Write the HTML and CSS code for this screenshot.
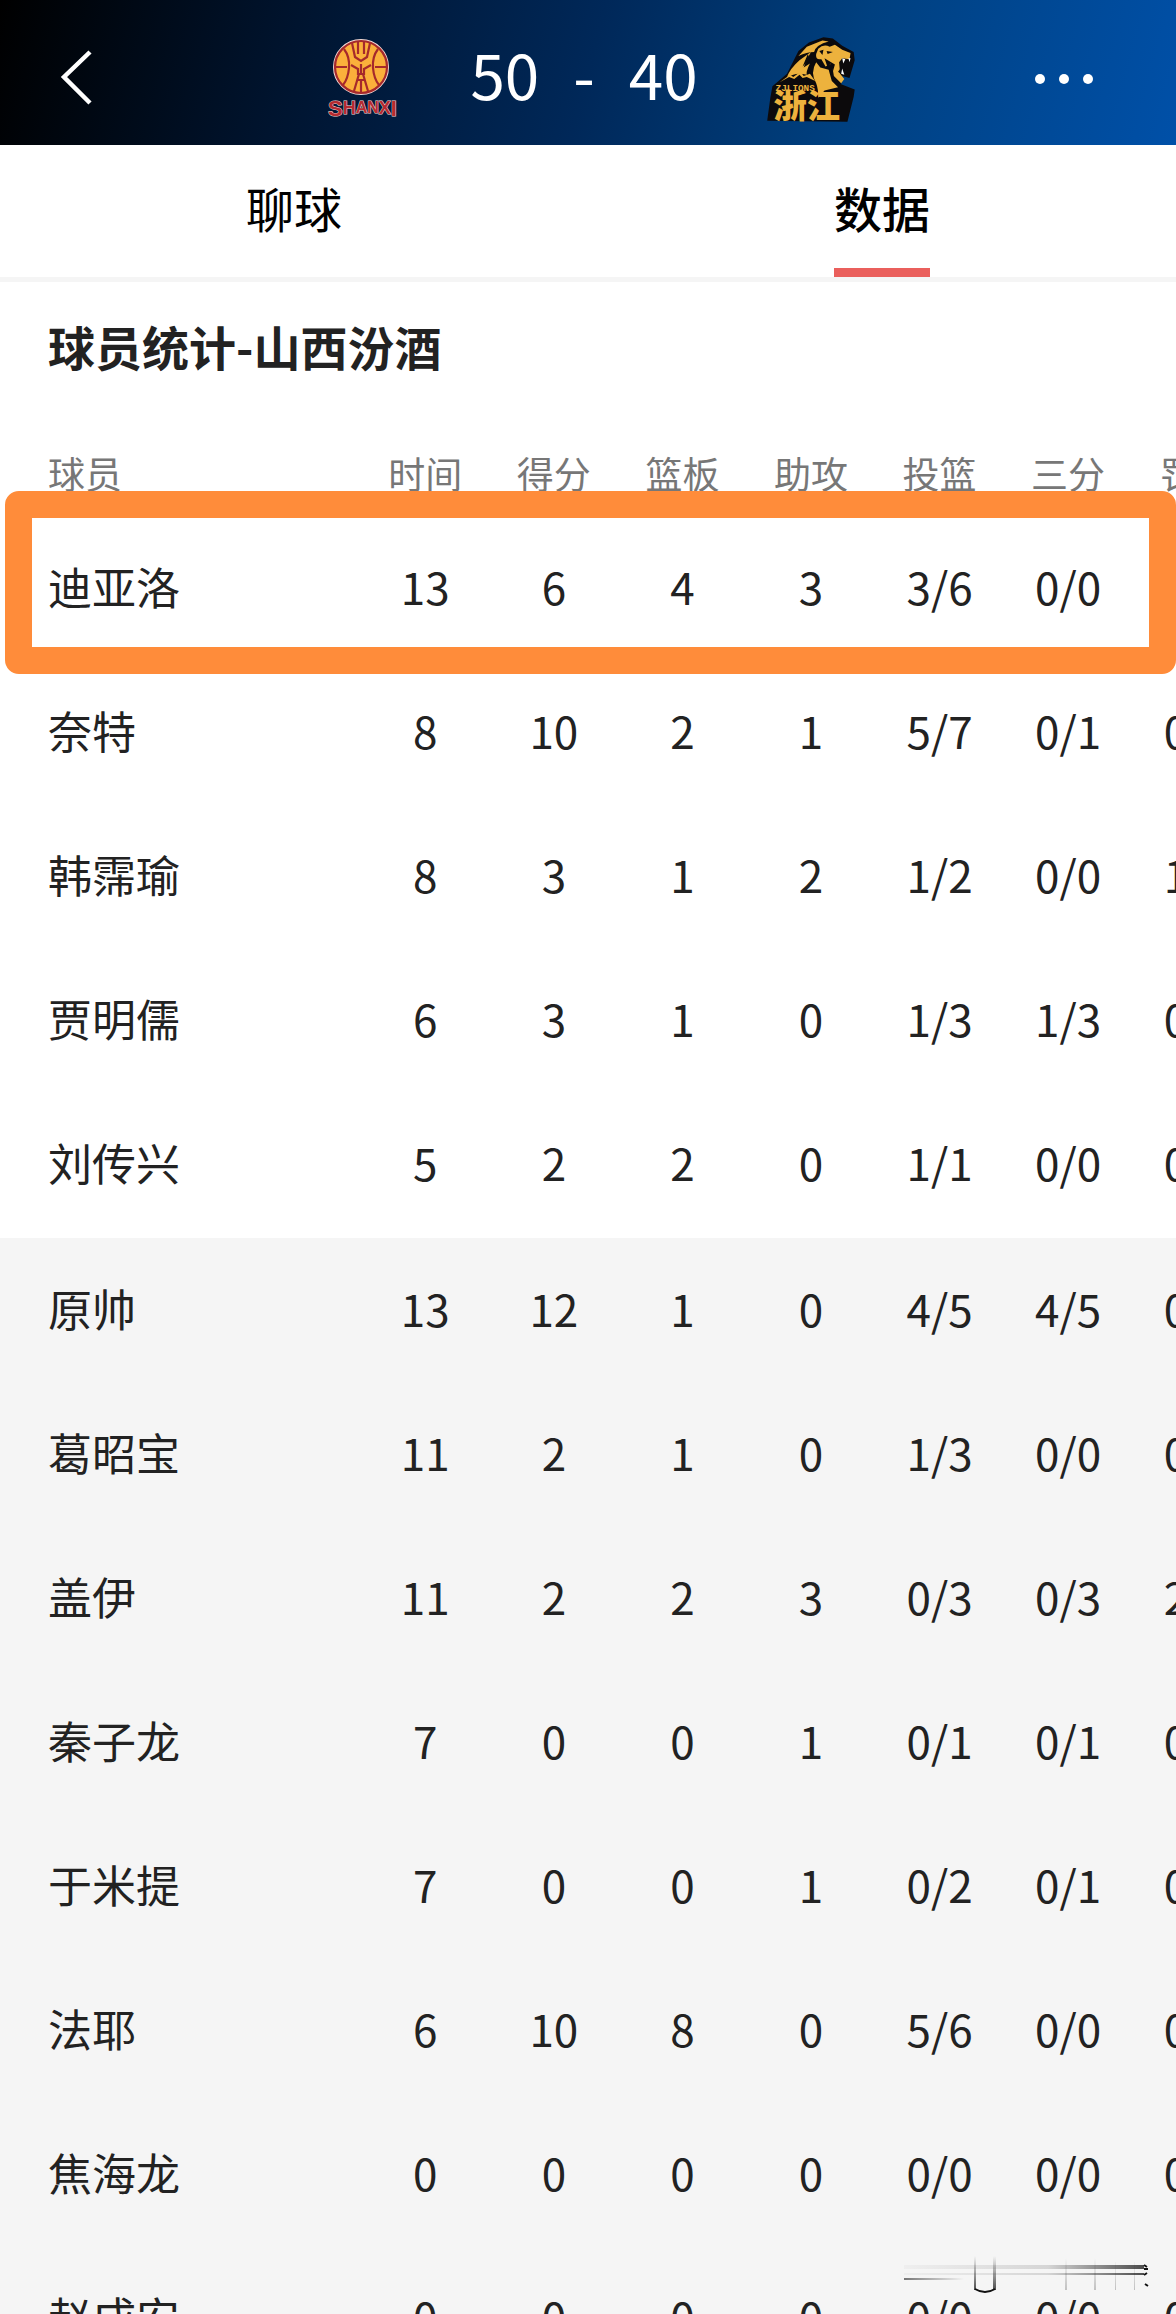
FILE: index.html
```
<!DOCTYPE html>
<html lang="zh-CN">
<head>
    <meta charset="UTF-8">
    <meta name="viewport" content="width=device-width, initial-scale=1.0">
    <title>球员统计</title>
    <link rel="stylesheet" href="styles.css">
</head>
<body>
<header class="header">
    <button class="icon-button back" aria-label="返回">
        <svg width="40" height="64" viewBox="0 0 40 64"><path d="M34 5 L8 30 L34 56" fill="none" stroke="#fff" stroke-width="4.5"/></svg>
    </button>
    <div class="match">
        <svg class="logo" width="88" height="88" viewBox="0 0 88 88">
            <circle cx="43" cy="32" r="27" fill="#fbb03b" stroke="#f4d9d4" stroke-width="2"/>
            <g fill="none" stroke="#a6292b" stroke-width="2.2">
                <circle cx="43" cy="32" r="26"/>
                <path d="M17 32h12M57 32h12M26 14q6 8 5 19t-6 17M60 14q-6 8-5 19t6 17"/>
                <path d="M34 8l3 14 6 4 6-4 3-14M40 7v12M46 7v12"/>
                <path d="M33 30l7 4M53 30l-7 4M43 29v10M40 33v6h6v-6M41 39l-5 17M45 39l5 17M39 45h8M43 46v12"/>
            </g>
            <text x="10" y="81" class="shanxi"><tspan class="outer">S</tspan><tspan class="middle" dy="-2">H</tspan><tspan dy="-1">AN</tspan><tspan class="middle" dy="1">X</tspan><tspan class="outer" dy="2">I</tspan></text>
        </svg>
        <div class="score"><span>50</span><span>-</span><span>40</span></div>
        <svg class="logo" width="100" height="92" viewBox="0 0 96 88">
            <path d="M10 51L24 39 35 17 45 9 59 4 68 5 77 12 88 18 89 26 84 43 77 41 76 49 89 54 88 61 82 85 5 84 8 62Z" fill="#0c0a0c"/>
            <g fill="#edb23d">
                <path d="M24 42q3-8 12-16l11-8q-5 9-7 15l6-4q-4 8-3 11-8-2-13 0z"/>
                <path d="M35 22l8-9 15-6 6 1q-12 3-14 10-7 0-15 4z"/>
                <path d="M54 15q5-5 11-2l5-2 7 5 8 3-1 6-7-1-3 4 1 11 4 5-3 4-7-7-2-12-6 3-4-7q-6 1-5-5z"/>
                <path d="M52 28l4 5 8 2 3 11 6 6-13 3-6 7q0-9-2-14-6-10 0-20z"/>
                <path d="M17 47l10-7 3 2 7-5 3 4 6-2 5 7-8-4-4 1-3-3-5 4-5-2z"/>
            </g>
            <path d="M62 17l6 1-5 2zM55 17l3 4 1-5zM44 20l-5 12 7-7zM60 24l3 9 3-4 2 8 2-7zM76 33l2 4 2-3-2 7-5-4" fill="#0c0a0c"/>
            <path d="M77 24l1 5 2-4M83 24l1 4 1-4M76 39l1-5 2 6" fill="#fff"/>
            <text x="13" y="56" class="lions">ZJLIONS</text>
            <text x="11" y="81" class="zhejiang">浙江</text>
        </svg>
    </div>
    <button class="icon-button more" aria-label="更多">
        <svg width="64" height="16" viewBox="0 0 64 16" fill="#fff"><circle cx="8" cy="8" r="5"/><circle cx="32" cy="8" r="5"/><circle cx="56" cy="8" r="5"/></svg>
    </button>
</header>

<nav class="tabs">
    <a class="tab" href="#chat">聊球</a>
    <a class="tab active" href="#data">数据</a>
</nav>

<main class="stats" id="data">
    <h1 class="title">球员统计-山西汾酒</h1>
    <div class="table-wrap">
        <table class="table">
            <thead>
                <tr><th class="name">球员</th><th>时间</th><th>得分</th><th>篮板</th><th>助攻</th><th>投篮</th><th>三分</th><th>罚球</th></tr>
            </thead>
            <tbody>
                <tr><td class="name">迪亚洛</td><td>13</td><td>6</td><td>4</td><td>3</td><td>3/6</td><td>0/0</td><td>0/0</td></tr>
                <tr><td class="name">奈特</td><td>8</td><td>10</td><td>2</td><td>1</td><td>5/7</td><td>0/1</td><td>0/0</td></tr>
                <tr><td class="name">韩霈瑜</td><td>8</td><td>3</td><td>1</td><td>2</td><td>1/2</td><td>0/0</td><td>1/2</td></tr>
                <tr><td class="name">贾明儒</td><td>6</td><td>3</td><td>1</td><td>0</td><td>1/3</td><td>1/3</td><td>0/0</td></tr>
                <tr><td class="name">刘传兴</td><td>5</td><td>2</td><td>2</td><td>0</td><td>1/1</td><td>0/0</td><td>0/0</td></tr>
            </tbody>
            <tbody class="bench">
                <tr><td class="name">原帅</td><td>13</td><td>12</td><td>1</td><td>0</td><td>4/5</td><td>4/5</td><td>0/0</td></tr>
                <tr><td class="name">葛昭宝</td><td>11</td><td>2</td><td>1</td><td>0</td><td>1/3</td><td>0/0</td><td>0/0</td></tr>
                <tr><td class="name">盖伊</td><td>11</td><td>2</td><td>2</td><td>3</td><td>0/3</td><td>0/3</td><td>2/2</td></tr>
                <tr><td class="name">秦子龙</td><td>7</td><td>0</td><td>0</td><td>1</td><td>0/1</td><td>0/1</td><td>0/0</td></tr>
                <tr><td class="name">于米提</td><td>7</td><td>0</td><td>0</td><td>1</td><td>0/2</td><td>0/1</td><td>0/0</td></tr>
                <tr><td class="name">法耶</td><td>6</td><td>10</td><td>8</td><td>0</td><td>5/6</td><td>0/0</td><td>0/0</td></tr>
                <tr><td class="name">焦海龙</td><td>0</td><td>0</td><td>0</td><td>0</td><td>0/0</td><td>0/0</td><td>0/0</td></tr>
                <tr><td class="name">赵成安</td><td>0</td><td>0</td><td>0</td><td>0</td><td>0/0</td><td>0/0</td><td>0/0</td></tr>
            </tbody>
        </table>
        <div class="highlight"></div>
    </div>
</main>

<svg class="mark" width="246" height="44" viewBox="0 0 246 44">
    <defs>
        <linearGradient id="fade"><stop offset="0" stop-color="#222" stop-opacity="0.03"/><stop offset="0.6" stop-color="#222" stop-opacity="0.15"/><stop offset="1" stop-color="#222" stop-opacity="0.8"/></linearGradient>
        <linearGradient id="fadeLeft"><stop offset="0" stop-color="#222" stop-opacity="0.6"/><stop offset="1" stop-color="#222" stop-opacity="0"/></linearGradient>
        <linearGradient id="drop" x2="0" y2="1"><stop offset="0" stop-color="#222" stop-opacity="0"/><stop offset="1" stop-color="#222" stop-opacity="0.8"/></linearGradient>
        <linearGradient id="dropSoft" x2="0" y2="1"><stop offset="0" stop-color="#222" stop-opacity="0"/><stop offset="1" stop-color="#222" stop-opacity="0.25"/></linearGradient>
    </defs>
    <path d="M0 15h240v4H0zM0 23h240v2H0z" fill="url(#fade)"/>
    <path d="M0 28h60v2H0z" fill="url(#fadeLeft)"/>
    <path d="M70 6h2v34h-2zM89 6h3v34h-3z" fill="url(#drop)"/>
    <path d="M161 8h2v32h-2zM190 8h2v32h-2zM211 12h1v28h-1zM230 12h1v28h-1z" fill="url(#dropSoft)"/>
    <path d="M71 39q10 6 20 0" fill="none" stroke="#111" stroke-width="2"/>
    <path d="M240 15l3 2M240 19h4M240 25l3-2M241 34l3 2" stroke="#111" stroke-width="2"/>
</svg>
</body>
</html>
```
FILE: styles.css
```
* {
    box-sizing: border-box;
}

body {
    margin: 0;
    height: 100vh;
    position: relative;
    overflow: hidden;
    background-color: #fff;
    color: #222;
    font-family: "Noto Sans CJK SC", sans-serif;
}

.header {
    display: flex;
    justify-content: space-between;
    align-items: center;
    height: 145px;
    padding: 12px 80px 0 56px;
    background: linear-gradient(105deg, #000 0%, #00142f 25%, #002859 50%, #004080 72%, #0050a8 100%);
    color: #fff;
}

.icon-button {
    display: flex;
    align-items: center;
    width: 64px;
    height: 64px;
    padding: 0;
    border: none;
    background: none;
    cursor: pointer;
}

.back {
    width: 92px;
}

.match {
    display: flex;
    align-items: center;
    gap: 64px;
}

.logo {
    display: block;
}

.score {
    display: flex;
    gap: 34px;
    padding-bottom: 12px;
    font-size: 62px;
    line-height: 88px;
}

.shanxi {
    font: bold 16px "Liberation Sans", sans-serif;
    fill: #b72a30;
    stroke: #f4d9d4;
    stroke-width: 1px;
    paint-order: stroke;
}

.shanxi .middle {
    font-size: 18px;
}

.shanxi .outer {
    font-size: 22px;
}

.lions {
    font: bold 9px "Liberation Mono", monospace;
    fill: #edb23d;
}

.zhejiang {
    font-size: 32px;
    font-weight: 900;
    fill: #edb23d;
}

.tabs {
    display: flex;
    height: 137px;
    border-bottom: 5px solid #f5f5f5;
}

.tab {
    flex: 1;
    display: flex;
    flex-direction: column;
    align-items: center;
    color: #000;
    font-size: 48px;
    line-height: 124px;
    text-decoration: none;
}

.active {
    font-weight: 500;
}

.active::after {
    content: "";
    width: 96px;
    height: 9px;
    margin-top: -1px;
    background-color: #ea5f5c;
}

.title {
    margin: 0;
    padding: 30px 48px 34px;
    font-size: 47px;
    line-height: 68px;
}

.table-wrap {
    position: relative;
    overflow: hidden;
}

.table {
    width: calc(100% + 85px);
    table-layout: fixed;
    border-collapse: collapse;
    font-size: 44px;
    line-height: 48px;
    text-align: center;
}

.table th {
    padding: 35px 0 21px;
    color: #777;
    font-size: 37px;
    font-weight: normal;
}

.table td {
    padding: 44px 0 52px;
}

.table .name {
    width: 361px;
    padding-left: 48px;
    text-align: left;
}

.bench {
    border-top: 2px solid #f5f5f5;
    background-color: #f5f5f5;
}

/* frame around the first player */
.highlight {
    position: absolute;
    top: 77px;
    left: 5px;
    right: 0;
    height: 183px;
    border: 27px solid #ff8c3a;
    border-radius: 14px;
}

.mark {
    position: absolute;
    right: 26px;
    bottom: 20px;
}
```
